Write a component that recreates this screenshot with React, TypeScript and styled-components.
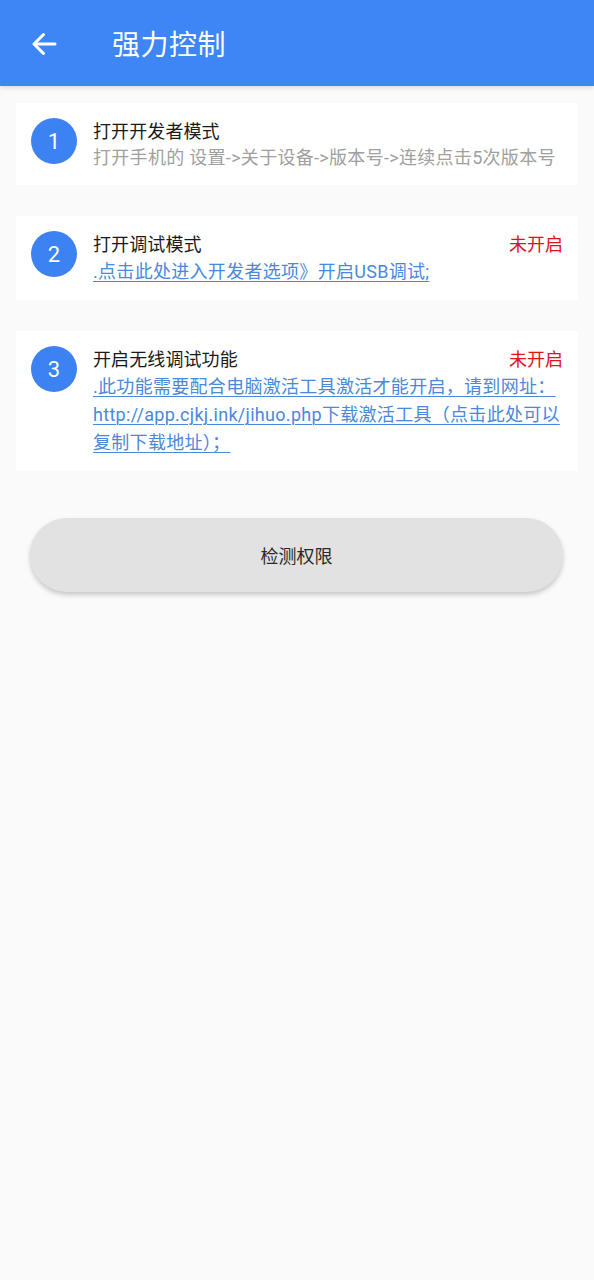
import React from "react";
import styled, { createGlobalStyle } from "styled-components";

const Global = createGlobalStyle`
  html, body { margin: 0; padding: 0; background: #fafafa; }
  body { font-family: Roboto, "Noto Sans CJK SC", "Noto Sans", sans-serif; }
  * { box-sizing: border-box; }
`;

const Page = styled.div`
  min-height: 1280px;
  background: #fafafa;
  display: flex;
  flex-direction: column;
`;

const Header = styled.header`
  height: 86px;
  background: #3e85f6;
  display: flex;
  align-items: center;
  padding-left: 30px;
  box-shadow: 0 2px 4px rgba(0, 0, 0, 0.12);
  position: relative;
  z-index: 1;
`;

const BackButton = styled.button`
  width: 28px;
  height: 28px;
  padding: 0;
  border: none;
  background: transparent;
  display: flex;
  align-items: center;
  justify-content: center;
  margin-right: 54px;
  margin-top: 2px;
`;

const HeaderTitle = styled.h1`
  margin: 0;
  font-size: 28px;
  font-weight: 400;
  color: #fff;
  letter-spacing: 0.5px;
`;

const Content = styled.main`
  display: flex;
  flex-direction: column;
  gap: 31px;
  padding: 17px 16px 0 16px;
`;

const Card = styled.section`
  background: #fff;
  padding: 15px 16px 14px 15px;
  display: flex;
  align-items: flex-start;
  gap: 16px;
`;

const StepCircle = styled.div`
  flex: 0 0 46px;
  width: 46px;
  height: 46px;
  border-radius: 50%;
  background: #3d82f2;
  color: #fff;
  font-size: 22px;
  display: flex;
  align-items: center;
  justify-content: center;
`;

const Body = styled.div`
  flex: 1;
  min-width: 0;
  display: flex;
  flex-direction: column;
  padding-top: 1px;
`;

const TitleRow = styled.div`
  display: flex;
  justify-content: space-between;
  align-items: center;
  height: 26px;
`;

const Title = styled.div`
  font-size: 18px;
  color: #1a1a1a;
  line-height: 26px;
  letter-spacing: 0.1px;
`;

const Status = styled.div`
  font-size: 18px;
  color: #e0121c;
  line-height: 26px;
  margin-right: -1px;
`;

const Desc = styled.div`
  font-size: 18px;
  color: #a0a0a0;
  line-height: 26px;
  white-space: nowrap;
  letter-spacing: 0.3px;
`;

const Link = styled.a`
  font-size: 18px;
  color: #4a88dc;
  line-height: 28px;
  letter-spacing: 0.3px;
  text-decoration: underline;
  text-underline-offset: 3px;
  text-decoration-thickness: 1px;
  cursor: pointer;
`;

const ButtonWrap = styled.div`
  padding: 47px 31px 0 30px;
`;

const CheckButton = styled.button`
  width: 100%;
  height: 74px;
  border: none;
  border-radius: 37px;
  background: #e2e2e2;
  box-shadow: 0 3px 5px rgba(0, 0, 0, 0.2);
  font-family: Roboto, "Noto Sans CJK SC", sans-serif;
  font-size: 18px;
  color: #2a2a2a;
`;

const BackArrow = () => (
  <svg width="26" height="24" viewBox="0 0 26 24" fill="none">
    <path
      d="M24 12H3M12.5 2.5L3 12l9.5 9.5"
      stroke="#fff"
      strokeWidth="3"
      strokeLinecap="round"
      strokeLinejoin="round"
    />
  </svg>
);

export default function App() {
  return (
    <>
      <Global />
      <Page>
        <Header>
          <BackButton aria-label="返回">
            <BackArrow />
          </BackButton>
          <HeaderTitle>强力控制</HeaderTitle>
        </Header>
        <Content>
          <Card>
            <StepCircle>1</StepCircle>
            <Body>
              <TitleRow>
                <Title>打开开发者模式</Title>
              </TitleRow>
              <Desc>打开手机的 设置-&gt;关于设备-&gt;版本号-&gt;连续点击5次版本号</Desc>
            </Body>
          </Card>
          <Card>
            <StepCircle>2</StepCircle>
            <Body>
              <TitleRow>
                <Title>打开调试模式</Title>
                <Status>未开启</Status>
              </TitleRow>
              <div>
                <Link>.点击此处进入开发者选项》开启USB调试;</Link>
              </div>
            </Body>
          </Card>
          <Card>
            <StepCircle>3</StepCircle>
            <Body>
              <TitleRow>
                <Title>开启无线调试功能</Title>
                <Status>未开启</Status>
              </TitleRow>
              <div>
                <Link>
                  .此功能需要配合电脑激活工具激活才能开启，请到网址：http://app.cjkj.ink/jihuo.php下载激活工具（点击此处可以复制下载地址）；
                </Link>
              </div>
            </Body>
          </Card>
        </Content>
        <ButtonWrap>
          <CheckButton>检测权限</CheckButton>
        </ButtonWrap>
      </Page>
    </>
  );
}
